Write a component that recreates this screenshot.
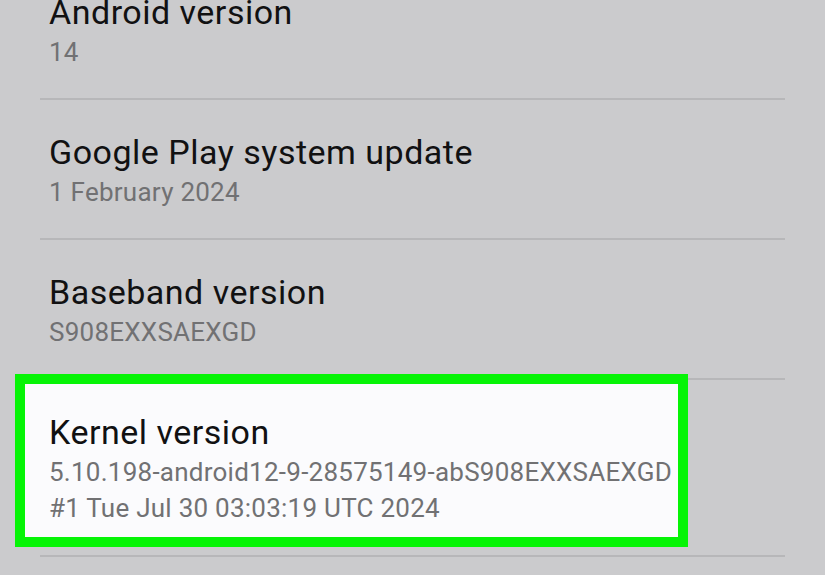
const rows = [
  { title: 'Android version', lines: ['14'] },
  { title: 'Google Play system update', lines: ['1 February 2024'] },
  { title: 'Baseband version', lines: ['S908EXXSAEXGD'] },
]

const Divider = () => <div className="ml-[40px] h-[2px] w-[745px] bg-[#b7b7b9]" />

const Row = ({ title, lines, tall, children }) => (
  <div className={`relative pl-[49px] pt-[32px] ${tall ? 'h-[175px]' : 'h-[138px]'}`}>
    {children}
    <div className="relative z-10">
      <div className="text-[34px] leading-[40px] tracking-[0.5px] text-[#111112]">{title}</div>
      <div className="mt-[2px]">
        {lines.map((l) => (
          <div key={l} className="text-[26px] leading-[36px] tracking-[0.25px] text-[#717173]">
            {l}
          </div>
        ))}
      </div>
    </div>
  </div>
)

export default function App() {
  return (
    <div
      className="relative h-[575px] w-[825px] overflow-hidden bg-[#cbcbcd]"
      style={{ fontFamily: 'Roboto, "Noto Sans", sans-serif' }}
    >
      <div className="-mt-[40px]">
        {rows.map((r) => (
          <div key={r.title}>
            <Row title={r.title} lines={r.lines} />
            <Divider />
          </div>
        ))}
        <Row
          tall
          title="Kernel version"
          lines={['5.10.198-android12-9-28575149-abS908EXXSAEXGD', '#1 Tue Jul 30 03:03:19 UTC 2024']}
        >
          <div className="absolute left-[15px] top-[-6px] h-[173px] w-[673px] border-[10px] border-[#06f406] bg-[#fbfbfd]" />
        </Row>
        <Divider />
      </div>
    </div>
  )
}
